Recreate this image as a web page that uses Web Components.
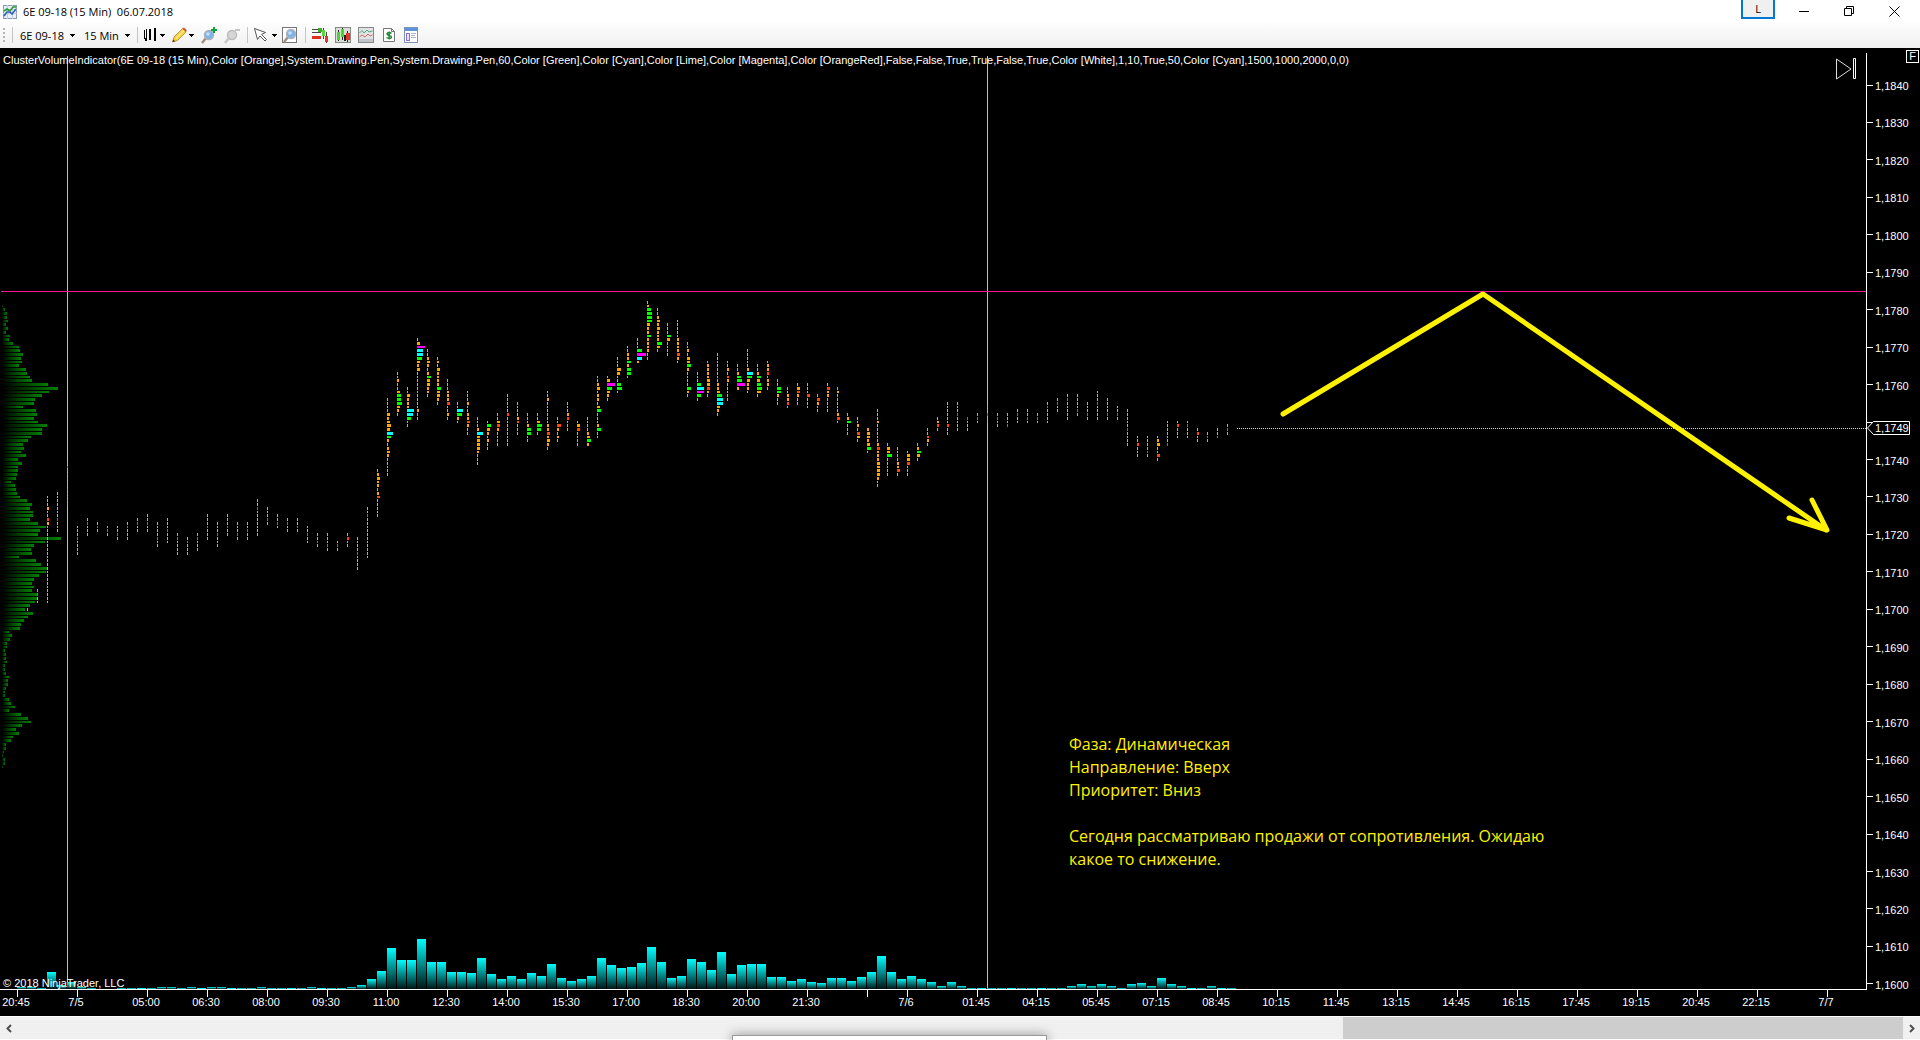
<!DOCTYPE html>
<html lang="ru">
<head>
<meta charset="utf-8">
<title>6E 09-18 (15 Min) 06.07.2018</title>
<style>
html,body{margin:0;height:100%;overflow:hidden;background:#fff}
body{font-family:"Open Sans","Noto Sans",sans-serif;font-size:11px;color:#000}
</style>
</head>
<body>
<trader-window></trader-window>
<script>
const define=(name,html,setup)=>customElements.define(name,class extends HTMLElement{
  constructor(){super();this.attachShadow({mode:"open"}).innerHTML=html;}
  connectedCallback(){if(setup&&!this.ready){this.ready=true;setup(this,this.shadowRoot);}}
});

/* ---------- title bar ---------- */
define("title-bar",`
<style>
:host{display:flex;align-items:center;height:23px;background:#fff;padding:0 3px;box-sizing:border-box}
.app{width:14px;height:14px;margin-right:6px}
h1{font:inherit;margin:0;white-space:pre;flex:1}
button{all:unset;width:45px;height:20px;display:flex;align-items:center;justify-content:center}
.lang{width:30px;height:17px;border:2px solid #0078d7;border-top:0;background:#f0f0f0;margin-right:7px;align-self:flex-start;line-height:15px}
</style>
<svg class="app" viewBox="0 0 14 14" shape-rendering="crispEdges"><rect width="14" height="14" fill="#e8eef6"/><path d="M0 .5h14M0 13.5h14M.5 0v14M13.5 0v14" stroke="#8a9bb8"/><path d="M0 4.5h14M0 8.5h14M4.5 0v14M9.5 0v14" stroke="#c3cee0"/><g shape-rendering="auto" fill="none" stroke-width="1.6"><path d="M1 6 4 4l3 2 3-4h3" stroke="#2b9a37"/><path d="M1 11 4 7l3 0 2 2 4-5" stroke="#2f62b5"/></g></svg>
<h1><slot></slot></h1>
<button class="lang" type="button">L</button>
<button type="button" aria-label="Minimize"><svg width="11" height="11"><path d="M0 5.5h10" stroke="#000"/></svg></button>
<button type="button" aria-label="Restore"><svg width="11" height="11" fill="none" stroke="#000"><path d="M.5 2.500h7v7h-7zM2.500 2.500v-2h7v7h-2"/></svg></button>
<button type="button" aria-label="Close"><svg width="11" height="11"><path d="M.5.5l10 10M10.500.5l-10 10" stroke="#000"/></svg></button>
`);

/* ---------- toolbar ---------- */
define("tool-separator",`<style>:host{display:block;width:1px;height:16px;background:#c5c5c5}</style>`);
define("tool-caret",`<style>:host{display:block;width:5px;height:3px}svg{display:block}</style><svg width="5" height="3" shape-rendering="crispEdges"><path d="M0 0h5v1h-1v1h-1v1h-1v-1h-1v-1h-1z"/></svg>`);
define("tool-choice",`
<style>:host{display:flex;align-items:center;gap:6px}
select{appearance:none;border:0;background:none;padding:0;margin:0;font:inherit;color:inherit;line-height:17px}</style>
<select></select><tool-caret></tool-caret>`,(el,r)=>{
  const s=r.querySelector("select");s.setAttribute("aria-label",el.getAttribute("label"));
  s.append(new Option(el.getAttribute("value")));
});
const glass=(x,y)=>`<g transform="translate(${x} ${y})"><path d="M5 9 1 14" stroke="#9a8f86" stroke-width="2.500"/><circle cx="8" cy="6" r="4.500" fill="#7fb4e6" stroke="#a9b4bf" stroke-width="1.500"/><circle cx="7" cy="5" r="1.800" fill="#c4e0fa"/></g>`;
const ICONS={
bars:[12,16,`<path d="M0 3h1v8h1V2h1v12H1v-2H0zM5 2h2v11H5zM10 1h2v13h-2z" shape-rendering="crispEdges"/>`],
pencil:[15,16,`<path d="M.5 15 2 10 10.500 1.500 14 5 5.500 13.500z" fill="#f6cf3a" stroke="#b8892a" stroke-width=".8"/><path d="M4 11.500 12 3.500" stroke="#fff09a" stroke-width="1.300"/><path d="M10.500 1.500 12 .5 14.800 3.300 14 5z" fill="#d94b3a"/><path d="M.5 15l.8-2.500 1.800 1.800z" fill="#333"/>`],
zoomin:[16,16,glass(0,2)+`<path d="M13 0v6M10 3h6" stroke="#0ca43a" stroke-width="2"/>`],
zoomout:[16,16,`<path d="M5 11 1 16" stroke="#c8c8c8" stroke-width="2.500"/><circle cx="8" cy="8" r="4.500" fill="#d6d6d6" stroke="#bdbdbd" stroke-width="1.500"/><path d="M11 3h5" stroke="#b0b0b0" stroke-width="1.500"/>`],
cursor:[14,16,`<path d="M.5 1.500 11.500 5.500 7.500 7.500 12.500 12.500 11 14 6 9 3.500 12.500z" fill="#fff" stroke="#555"/>`],
glassbox:[16,16,`<rect x=".5" y=".5" width="14" height="15" fill="#fff" stroke="#777"/>`+glass(1,1)],
trader:[16,16,`<g shape-rendering="crispEdges"><path d="M0 2h8v1H0z" fill="#444"/><path d="M5 5h4v1H0V5z" fill="#444"/><path d="M6 1h4v4H6z" fill="#3fae2a"/><path d="M0 9h9v3H0z" fill="#e02b20"/><path d="M11.500 1v11M14.500 5v11" stroke="#444"/><path d="M10 3h3v6h-3z" fill="#57d83b"/><path d="M13 9h3v6h-3z" fill="#e33a2e"/></g>`],
candles:[16,16,`<g shape-rendering="crispEdges"><rect x=".5" y=".5" width="15" height="15" fill="#d9ded9" stroke="#888"/><path d="M3.500 3v11M7.500 1v12M12.500 4v11" stroke="#222"/><path d="M2 5h3v8h-3zM6 2h3v8h-3z" fill="#4bd32e"/><path d="M11 6h4v7h-4z" fill="#e0382c"/><path d="M9 8h2v6h-2z" fill="#222"/></g>`],
line:[16,16,`<rect x=".5" y=".5" width="15" height="15" fill="#dfe3e6" stroke="#888"/><path d="M1 12h14v3h-14z" fill="#bfc4c8"/><g fill="none"><path d="M1.500 6 4 3.500 6 6 9 3l2 2 3.500-1" stroke="#58a877"/><path d="M1.500 10 4 8l3 2 3-3 2 2 2.500-1" stroke="#d86b62"/></g>`],
dollar:[16,16,`<path d="M2.500 1.500h8l3 3v10h-11z" fill="#fff" stroke="#777"/><path d="M10.500 1.500v3h3" fill="none" stroke="#777"/><path d="M10.500 6.500C9 5 6 5.400 6 7s4.500 1.300 4.500 3-3 2-5 .5M8.200 4.500v8" fill="none" stroke="#218a35" stroke-width="1.500"/>`],
props:[14,16,`<g shape-rendering="crispEdges"><rect x=".5" y=".5" width="13" height="15" fill="#fff" stroke="#7d93b5"/><path d="M1 1h12v3h-12z" fill="#5b93dc"/><rect x="2.500" y="6.500" width="3" height="7" fill="#e8e2ff" stroke="#8a6ee0"/><path d="M7 6.500h5M7 8.500h4M7 10.500h5" stroke="#a9b6cc"/></g>`]};
define("tool-icon",`<style>:host{display:block}button{all:unset;display:block}svg{display:block;overflow:visible}</style><button type="button"></button>`,(el,r)=>{
  const n=el.getAttribute("name"),[w,h,d]=ICONS[n],b=r.querySelector("button");b.setAttribute("aria-label",n);
  b.innerHTML=`<svg width="${w}" height="${h}">${d}</svg>`;
});
define("tool-bar",`
<style>
:host{display:flex;align-items:center;height:25px;background:linear-gradient(#fdfdfd,#f0f0f0);padding:0 0 1px 3px;box-sizing:border-box}
.grip{width:2px;height:14px;background:repeating-linear-gradient(#b4b4b4 0 2px,transparent 2px 4px);margin-right:7px}
.set{display:flex;align-items:center;gap:7px}
.pair{display:flex;align-items:center;gap:4px}
.tight{gap:2px}
.choices{gap:9px;margin:0 7px}
.wide{margin:0 7px 0 6px}
.near{gap:5px}
</style>
<div class="grip"></div><tool-separator></tool-separator>
<div class="set choices"><tool-choice label="Instrument" value="6E 09-18"></tool-choice><tool-choice label="Interval" value="15 Min"></tool-choice></div>
<tool-separator></tool-separator>
<div class="set wide"><div class="pair"><tool-icon name="bars"></tool-icon><tool-caret></tool-caret></div><div class="pair tight"><tool-icon name="pencil"></tool-icon><tool-caret></tool-caret></div><tool-icon name="zoomin"></tool-icon><tool-icon name="zoomout"></tool-icon></div>
<tool-separator></tool-separator>
<div class="set wide near"><div class="pair"><tool-icon name="cursor"></tool-icon><tool-caret></tool-caret></div><tool-icon name="glassbox"></tool-icon></div>
<tool-separator></tool-separator>
<div class="set wide"><tool-icon name="trader"></tool-icon><tool-icon name="candles"></tool-icon><tool-icon name="line"></tool-icon><tool-icon name="dollar"></tool-icon><tool-icon name="props"></tool-icon></div>
`);

/* ---------- plot ---------- */
/* Top edge of price row k; one row is one tick of 0.0001. */
const TOP=48;
const rowY=k=>305+(k<11?Math.floor(3.75*k):41+Math.floor(3.75*(k-11)));
const rowAt=y=>{let k=-3;while(rowY(k+1)<=y)k++;return k;};
/* Right edge of the volume profile, row by row. */
const PROFILE=[3,5,7,7,8,6,8,6,10,9,13,19,20,23,21,22,19,26,27,30,32,48,58,49,42,35,34,23,36,37,34,38,47,42,42,31,28,23,24,21,26,18,22,18,18,17,16,11,15,16,17,20,27,32,30,33,33,30,38,46,40,38,61,45,34,31,32,19,36,41,48,46,39,34,32,34,32,38,38,35,30,25,33,28,24,21,20,9,12,10,7,7,5,6,6,7,5,5,6,9,8,8,6,5,5,9,11,15,9,21,28,31,22,16,19,13,11,6,6,4,3,5,5,3];
/* One cluster bar per line: top, bottom, then special cells as y:colour+width. Bars are 10px apart from x=27. */
const CLUSTERS=`608 611
589 603 593:R1
496 603 508:O2 518:R2 522:O2
492 532 518:R1
462 506 466:R1
526 555 537:R1
518 536 522:R1
522 532 526:R1
526 536 529:R1
526 540 533:R1
522 540 526:R1
518 532 522:R1
514 532 522:R1
522 547 537:R1
518 543 530:R1
533 555 537:R1
537 555 541:R1
533 551 537:R1
514 540 526:R1
522 547 534:R1
514 536 526:R1
522 540 534:R1
522 540 530:R1
499 536 508:R1
507 525 518:R1
514 528 522:R1
518 532 522:R1
518 532 526:R1
526 543 534:R1
533 547 541:R1
533 551 545:R1
541 551 545:R1
533 547 538:R2
537 570 553:R1
507 558 515:R1
469 517 474:O2 478:O3 482:O2 485:O2 493:O2 497:R3
398 476 414:O3 418:O2 422:O3 425:O4 429:O3 433:C6 437:G4 440:O2 448:O2 452:O3 455:O2
372 416 380:O2 392:O3 395:G4 399:G4 403:G5 407:O3 410:O2
387 427 395:O3 399:O2 403:O2 407:O2 410:C7 414:C6 418:G4
338 420 343:O3 347:M8 350:C6 354:C6 358:G5 362:O3 365:O2 369:O3 410:O2
349 397 358:O2 362:O3 365:O2 373:O2 377:G4 380:O3 384:O3 388:O2 392:O2
357 405 362:O2 369:O3 373:O2 377:O2 380:O2 384:O2 388:G4 392:O3 395:O3 399:O2
379 420 392:O2 395:O2 399:O2 403:R3 414:O2
402 423 410:C6 414:G5 418:O2
391 435 403:O2 414:O2 418:O2 422:R3 425:O2
417 465 429:O2 433:C6 437:O3 440:O3 444:O3 448:O3 452:O2
421 450 425:G4 429:O3 433:O2 440:O2
413 446 422:O3 425:R3 429:O2
394 446 414:R2
402 435 418:O2 422:R2
413 442 425:O2 429:G4 433:G4
413 435 422:O3 425:G5 429:G4
391 450 399:O2 425:O2 429:O2 433:R3 437:O2 440:O3 444:O2
417 442 425:R4 429:O2 437:O2
402 431 414:O2 418:R2
421 446 425:O3 429:R3
417 446 433:O2 437:O3 440:G4 444:O2
376 438 384:O2 388:O3 395:O2 399:O2 407:O3 410:G4 425:O2 429:G4
376 401 380:O3 384:M8 388:G5 392:O3 395:O2
357 393 369:O4 373:O3 384:G4 388:G5
346 378 354:O2 358:O2 362:G4 365:O2 369:G4 373:G4
338 363 350:G5 354:M9 358:C5 362:O2
301 360 306:O2 309:G4 313:G5 317:G5 321:G5 324:O3 328:O2 332:O2 336:G4 339:O2 343:O2 347:O2 350:O2
308 352 317:O2 321:O3 324:O2 328:O3 332:O2 336:O2 339:O2 343:G5 347:O3
323 356 336:G4 339:O3
320 363 339:O2 343:O2 347:O2 350:O2 354:R3 358:O2
342 397 350:O2 358:O3 362:O3 365:G4 369:O2 388:G4 392:O2
372 401 384:G4 388:C7 392:M7 395:G4
361 397 365:O2 369:O2 373:O2 377:O2 380:O3 384:O3 388:R3 392:O2
353 416 384:O2 388:O2 392:O3 395:G5 399:C6 403:C6 407:O3 410:O2
361 401 369:O2 377:R2 380:O2
364 390 373:O2 377:G4 380:G5 384:M8 388:O2
349 393 369:O2 373:C6 377:G5 380:O3 384:O2 388:O2
364 397 373:O2 377:G4 380:O3 384:G4 388:G5 392:O4
361 390 365:O2 369:O2 373:R2 380:O2 384:O2
379 405 388:G4 392:G4 395:O2
387 408 395:O2 399:O2 403:R2
383 405 388:O3 392:R3 395:O2
383 408 395:R3
394 412 399:R3 403:O2
383 412 388:R3 392:O2 395:O2
387 423 392:O2 414:O2 418:R3
413 435 418:O2 422:G4
417 442 425:O2 433:R3 437:O3
428 453 429:O2 433:O3 437:O3 440:O2 444:O3 448:G4
409 487 422:O2 444:O2 448:R3 452:O2 455:O2 459:O2 463:O3 467:O3 470:O3 474:O3 478:O2
443 476 448:O3 452:O3 455:G5
447 476 463:O2 467:O2 470:R3
451 476 455:O3 459:O3 463:R3
443 461 448:O2 452:G4 455:O3
428 446 437:R2 440:O2
417 431 422:O2 425:R2
402 435 425:R2
402 431 414:R1
417 431 418:R1
413 423 418:R1
406 424 414:R1
413 427 418:R1
413 427 425:R1
409 423 414:R1
409 423 418:R1
413 423 418:R1
402 423 407:R1
398 412 403:R1
394 420 399:R1
394 416 411:R1
402 420 414:R1
391 420 403:R1
398 420 414:R1
406 420 414:R1
409 446 429:R1
436 457 444:R2
436 457 452:R1
436 461 440:O2 444:O3 455:R3
421 446 444:R1
421 438 425:R2
421 438 425:R1
428 442 433:R2
432 442 437:R1
428 438 437:R1
424 435 429:R1`.split("\n");
/* Volume heights from x=17, 10px apart. */
const VOLUME=[2,2,1,17,4,7,2,1,0,0,1,1,1,1,2,2,1,2,1,2,2,1,1,1,2,1,1,1,1,2,1,1,1,2,4,10,18,41,29,29,50,27,27,17,17,16,31,15,10,13,10,16,13,25,11,8,10,13,31,24,21,22,26,42,27,11,13,30,27,19,37,15,24,25,25,12,12,8,10,7,6,11,11,8,12,17,33,17,10,13,10,7,3,7,3,1,1,1,1,1,1,1,1,1,1,3,5,3,5,3,1,5,6,3,11,5,3,1,1,3,1,1];
const HUE={O:"#ffa500",R:"#ff4500",G:"#00ff00",C:"#00ffff",M:"#ff00ff"};
define("cluster-plot",`
<style>
:host{display:block;position:relative;border-bottom:1px solid #fff;overflow:hidden;min-width:0}
svg.chart{display:block;width:100%;height:100%;shape-rendering:crispEdges}
.formula,.mark,.note,.last{position:absolute;margin:0}
.formula{left:3px;top:6px;white-space:nowrap}
.mark{left:3px;bottom:0;line-height:12px}
.note{left:1069px;top:685px;width:510px;color:#fff200;font:16px/23px "Open Sans","Noto Sans",sans-serif;white-space:pre-line}
.last{all:unset;position:absolute;right:9px;top:10px;width:22px;height:23px}
</style>
<p class="formula"><slot name="formula"></slot></p>
<svg class="chart"></svg>
<p class="note"><slot name="note"></slot></p>
<p class="mark"><slot name="mark"></slot></p>
<button class="last" type="button" aria-label="Go to last bar"><svg width="22" height="23" fill="none" stroke="#ddd"><path d="M1.500 1v20L16 11z"/><path d="M18.500.5h2v20h-2z" stroke="#fff"/></svg></button>
`,(el,r)=>{
  let o=`<defs><linearGradient id="p"><stop stop-color="#000"/><stop offset="1" stop-color="#008000"/></linearGradient><linearGradient id="v" x2="0" y2="1"><stop stop-color="#0ff"/><stop offset="1" stop-color="#001414"/></linearGradient></defs><g transform="translate(0 ${-TOP})">`;
  const rect=(x,y,w,h,f)=>{o+=`<rect x="${x}" y="${y}" width="${w}" height="${h}" fill="${f}"/>`;};
  PROFILE.forEach((e,k)=>rect(2,rowY(k),e-2,rowY(k+1)-rowY(k)-1,"url(#p)"));
  rect(67,56,1,932,"#c0c0c0");rect(987,56,1,932,"#c0c0c0");
  rect(1,291,"100%",1,"#ff1493");
  CLUSTERS.forEach((line,i)=>{
    const [a,b,...cells]=line.split(" "),x=27+10*i,special={};
    cells.forEach(c=>{const [y,s]=c.split(":");special[rowAt(+y)]=s;});
    for(let k=rowAt(+a);rowY(k)<+b;k++){
      const s=special[k]||"O1";
      rect(x,rowY(k),+s[1],rowY(k+1)-rowY(k)-1,HUE[s[0]]);
    }
  });
  VOLUME.forEach((h,i)=>{if(h)rect(17+10*i,989-h,9,h,h<2?(i%3?"#00b4b4":"#00f0f0"):"url(#v)");});
  o+=`<path d="M1237 428.500H4000" stroke="#d8d8d8" stroke-dasharray="1 1"/>`;
  o+=`<g shape-rendering="auto" fill="none" stroke="#fff200" stroke-width="5" stroke-linecap="round" stroke-linejoin="round"><path d="M1283 414 1483 294 1826 530M1812 500 1827 530 1789 518"/></g></g>`;
  r.querySelector(".chart").innerHTML=o;
});

define("price-axis",`
<style>
:host{display:flex;flex-direction:column;justify-content:space-between;position:relative;margin-top:5px;padding-top:26px;border-left:1px solid #fff;box-sizing:border-box}
.p{display:flex;align-items:center;gap:2px;height:12px;line-height:12px;padding-top:2px;box-sizing:border-box}
.p::before{content:"";width:6px;height:1px;margin-bottom:2px;background:#fff}
.f{all:unset;position:absolute;right:1px;top:-3px;width:11px;height:11px;border:1px solid #fff;line-height:11px;text-align:center;font-size:11px}
.now{position:absolute;left:0;top:368px;width:43px;height:14px}
.now svg{position:absolute;inset:0}
.now span{position:absolute;left:8px;top:1px;line-height:12px}
</style><button class="f" type="button">F</button>`,(el,r)=>{
  for(let p=11840;p>=11600;p-=10){const d=document.createElement("div");d.className="p";d.textContent=p===11750?"":"1,"+String(p).slice(1);r.append(d);}
  const n=document.createElement("div");n.className="now";
  n.innerHTML=`<svg width="43" height="14"><path d="M.5 7 6.500.5h36v13h-36z" fill="#000" stroke="#fff"/></svg><span>1,1749</span>`;
  r.append(n);
});

/* Each label is 60px wide and centred on its tick; the second value is extra space before it. */
define("time-axis",`
<style>
:host{display:flex;align-items:flex-start;overflow:hidden;min-width:0}
span{flex:none;width:60px;display:flex;flex-direction:column;text-align:center;text-indent:-2px;line-height:11px}
span::before{content:"";width:1px;height:7px;background:#fff;margin-left:30px}
</style>`,(el,r)=>{
  [["20:45",-13],["7/5"],["05:00",10],["06:30"],["08:00"],["09:30"],["11:00"],["12:30"],["14:00"],["15:30"],["17:00"],["18:30"],["20:00"],["21:30"],[""],["7/6",-20],["01:45",10],["04:15"],["05:45"],["07:15"],["08:45"],["10:15"],["11:45"],["13:15"],["14:45"],["16:15"],["17:45"],["19:15"],["20:45"],["22:15"],["7/7",10]].forEach(([t,m])=>{
    const s=document.createElement("span");s.textContent=t;if(m)s.style.marginLeft=m+"px";r.append(s);
  });
});

define("chart-panel",`
<style>
:host{display:grid;grid-template-columns:1fr 54px;grid-template-rows:1fr 26px;background:#000;color:#fff;font:11px "Liberation Sans",Arial,sans-serif;min-height:0}
</style>
<cluster-plot>
<span slot="formula">ClusterVolumeIndicator(6E 09-18 (15 Min),Color [Orange],System.Drawing.Pen,System.Drawing.Pen,60,Color [Green],Color [Cyan],Color [Lime],Color [Magenta],Color [OrangeRed],False,False,True,True,False,True,Color [White],1,10,True,50,Color [Cyan],1500,1000,2000,0,0)</span>
<span slot="note">Фаза: Динамическая
Направление: Вверх
Приоритет: Вниз

Сегодня рассматриваю продажи от сопротивления. Ожидаю какое то снижение.</span>
<span slot="mark">© 2018 NinjaTrader, LLC</span>
</cluster-plot>
<price-axis></price-axis>
<time-axis></time-axis>
`);

define("scroll-strip",`
<style>
:host{display:flex;height:24px;background:#f0f0f0;border-top:1px solid #fff;border-bottom:1px solid #fff;box-sizing:border-box;position:relative}
button{all:unset;width:17px;display:flex;align-items:center;justify-content:center}
.track{flex:1;display:flex;justify-content:flex-end}
.thumb{width:29.7%;background:#cdcdcd}
.peek{position:absolute;left:732px;bottom:-6px;width:313px;height:8px;border:1px solid #999;background:#fff;box-shadow:0 0 12px #0006}
</style>
<button type="button" aria-label="Scroll left"><svg width="6" height="9"><path d="M5 1 1.500 4.500 5 8" fill="none" stroke="#505050" stroke-width="2"/></svg></button>
<div class="track"><div class="thumb"></div></div>
<button type="button" aria-label="Scroll right"><svg width="6" height="9"><path d="M1 1 4.500 4.500 1 8" fill="none" stroke="#505050" stroke-width="2"/></svg></button>
<div class="peek"></div>
`);

define("trader-window",`
<style>:host{display:flex;flex-direction:column;height:100vh;overflow:hidden}chart-panel{flex:1}</style>
<title-bar>6E 09-18 (15 Min)  06.07.2018</title-bar>
<tool-bar></tool-bar>
<chart-panel></chart-panel>
<scroll-strip></scroll-strip>
`);
</script>
</body>
</html>
